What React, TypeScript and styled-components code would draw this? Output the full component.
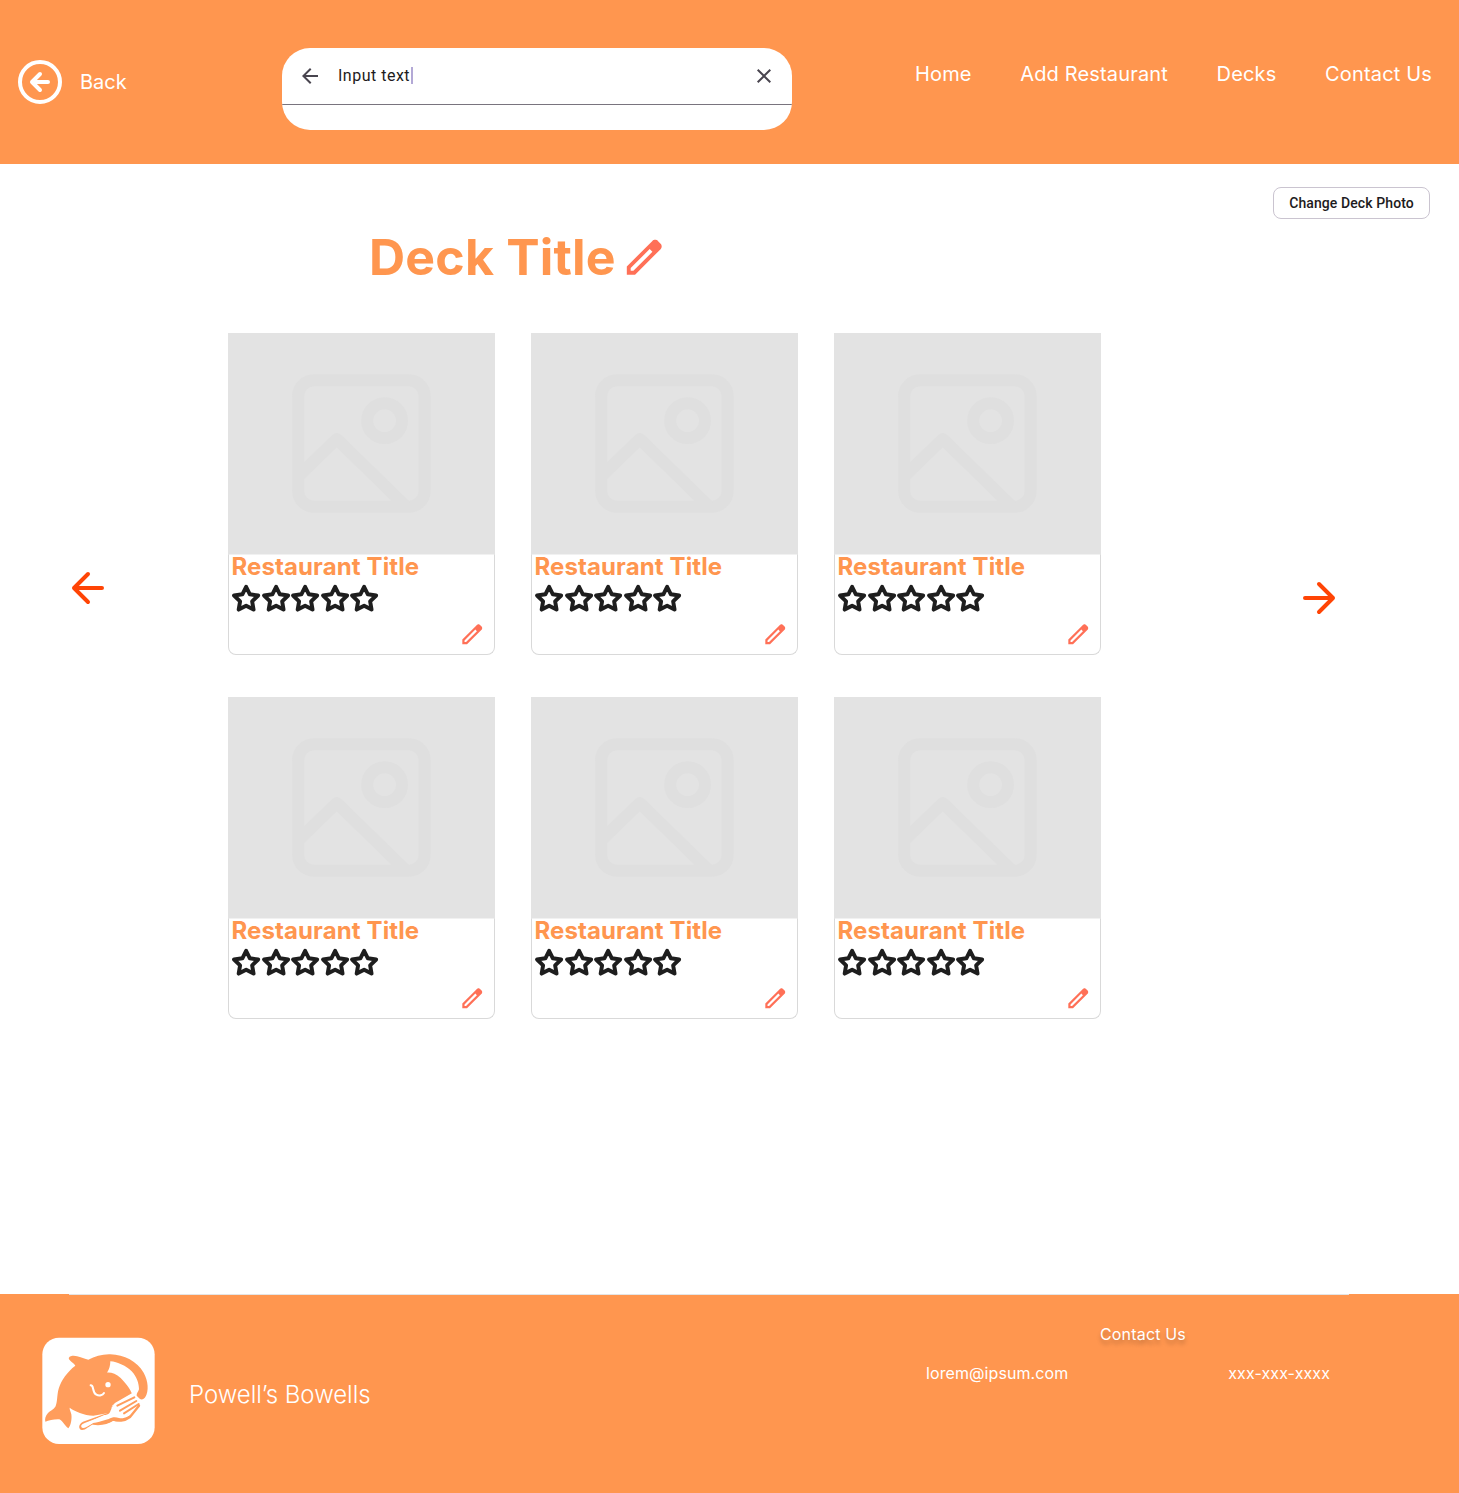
import React from 'react';
import styled, { createGlobalStyle } from 'styled-components';

const ORANGE = '#ff964f';
const WHALE = '#ff9d5c';
const CORAL = '#ff7057';

const GlobalStyle = createGlobalStyle`
  * { box-sizing: border-box; }
  body {
    margin: 0;
    background: #fff;
    font-family: Inter, "Liberation Sans", sans-serif;
  }
  svg { display: block; flex: none; }
  button { font: inherit; color: inherit; background: none; border: 0; padding: 0; }
  a { color: inherit; text-decoration: none; }
`;

const Page = styled.div`
  width: 1459px;
  height: 1493px;
  display: flex;
  flex-direction: column;
  overflow: hidden;
`;

const Header = styled.header`
  height: 164px;
  flex: none;
  display: flex;
  align-items: flex-start;
  background: ${ORANGE};
  color: #fff;
`;

const BackButton = styled.button`
  display: flex;
  align-items: center;
  gap: 16px;
  width: 266px;
  height: 48px;
  margin: 58px 0 0 16px;
  font-size: 20px;
  line-height: 24px;
`;

const SearchBox = styled.div`
  width: 510px;
  height: 82px;
  margin-top: 48px;
  border-radius: 28px;
  background: #fff;
  overflow: hidden;
`;

const SearchRow = styled.div`
  display: flex;
  align-items: center;
  height: 57px;
  padding: 0 16px 1px;
  border-bottom: 1px solid #79747e;
`;

const SearchText = styled.span`
  flex: 1;
  display: flex;
  align-items: center;
  padding-left: 16px;
  font: 400 16px/24px Roboto, sans-serif;
  letter-spacing: 0.5px;
  color: #1d1b20;
`;

const Caret = styled.span`
  width: 1.5px;
  height: 17px;
  margin-left: 1px;
  background: #b3a9d6;
`;

const Nav = styled.nav`
  display: flex;
  gap: 48.6px;
  margin: 62px 27px 0 auto;
  font-size: 20px;
  line-height: 24px;
  letter-spacing: 0.16px;
  font-weight: 420;
  white-space: nowrap;
`;

const Main = styled.main`
  height: 1130px;
  flex: none;
  display: flex;
  flex-direction: column;
`;

const PhotoButton = styled.button`
  align-self: flex-end;
  width: 157px;
  height: 32px;
  margin: 23px 29px 0 0;
  border: 1px solid #cac4d0;
  border-radius: 8px;
  font: 500 14px/20px Roboto, sans-serif;
  letter-spacing: 0.1px;
  color: #1d1b20;
  white-space: nowrap;
`;

const TitleRow = styled.div`
  display: flex;
  align-items: center;
  gap: 5px;
  height: 60px;
  margin: 8px 0 0 369px;
`;

const DeckTitle = styled.h1`
  margin: 0;
  font-size: 50px;
  line-height: 60px;
  font-weight: 700;
  letter-spacing: 0.2px;
  color: ${ORANGE};
  white-space: nowrap;
`;

const Carousel = styled.section`
  display: flex;
  align-items: flex-start;
  margin-top: 46px;
`;

const Pager = styled.button<{ $side: 'left' | 'right' }>`
  width: 48px;
  height: 48px;
  margin: ${p => (p.$side === 'left' ? '231px 116px 0 64px' : '241px 0 0 194px')};
`;

const CardGrid = styled.div`
  display: grid;
  grid-template-columns: repeat(3, 267px);
  gap: 42px 36px;
`;

const Card = styled.article`
  display: flex;
  flex-direction: column;
  height: 322px;
  border-radius: 0 0 8px 8px;
`;

const Photo = styled.div`
  height: 221px;
  flex: none;
  background: #e3e3e3;
`;

const CardBody = styled.div`
  display: flex;
  flex-direction: column;
  flex: 1;
  padding-left: 2px;
  border: 1px solid #d9d9d9;
  border-top-color: #f1f1f1;
  border-radius: 0 0 8px 8px;
`;

const CardTitle = styled.h2`
  margin: -3px 0 0 0.4px;
  font-size: 24px;
  line-height: 30px;
  font-weight: 700;
  letter-spacing: 0.12px;
  color: ${ORANGE};
  white-space: nowrap;
`;

const Stars = styled.div`
  display: flex;
  height: 30px;
  margin-top: 2px;
`;

const EditButton = styled.button`
  align-self: flex-end;
  margin: 7px 9px 0 0;
`;

const Footer = styled.footer`
  height: 199px;
  flex: none;
  display: flex;
  flex-direction: column;
  background: ${ORANGE};
  color: #fff;
`;

const Rule = styled.div`
  width: 1280px;
  height: 1px;
  margin-left: 69px;
  background: #e4e4e4;
`;

const FooterContent = styled.div`
  display: flex;
  align-items: flex-start;
`;

const Brand = styled.div`
  display: flex;
  gap: 34px;
  padding: 42px 0 0 42px;
`;

const BrandName = styled.span`
  padding-top: 43px;
  font-size: 24px;
  line-height: 29px;
  font-weight: 300;
  letter-spacing: -0.03px;
  white-space: nowrap;
`;

const ContactBlock = styled.div`
  width: 404px;
  margin: 29px 129px 0 auto;
  font-size: 16px;
  line-height: 20px;
  letter-spacing: 0.09px;
  font-weight: 420;
`;

const ContactHeading = styled.div`
  padding-left: 174px;
  letter-spacing: 0.17px;
  text-shadow: 0 4px 4px rgba(0, 0, 0, 0.25);
`;

const ContactRow = styled.div`
  display: flex;
  justify-content: space-between;
  margin-top: 19px;
`;

const PencilIcon = ({ size }: { size: number }) => (
  <svg width={size} height={size} viewBox="0 0 24 24" fill={CORAL}>
    <path
      fillRule="evenodd"
      d="M3 21V16.75L16.2 3.575C16.4 3.39 16.62 3.25 16.86 3.15C17.1 3.05 17.36 3 17.625 3C17.89 3 18.15 3.05 18.4 3.15C18.65 3.25 18.87 3.4 19.05 3.6L20.425 5C20.625 5.18 20.77 5.4 20.86 5.65C20.95 5.9 21 6.15 21 6.4C21 6.67 20.95 6.92 20.86 7.16C20.77 7.4 20.625 7.625 20.425 7.825L7.25 21H3ZM5 19H6.4L16.225 9.2L14.8 7.775L5 17.6V19Z"
    />
  </svg>
);

const StarIcon = () => (
  <svg width="29.5" height="29.5" viewBox="-0.3 0 24 24" fill="none" stroke="#1e1e1e" strokeWidth="3.2" strokeLinejoin="round" overflow="visible">
    <path d="M12 2.3L15.04 8.36L21.8 9.35L16.9 14.1L18.06 20.82L12 17.65L5.94 20.82L7.1 14.1L2.2 9.35L8.96 8.36Z" />
  </svg>
);

const PlaceholderImage = () => (
  <svg width="267" height="221" viewBox="0 0 267 221" fill="none" stroke="#dfdfdf" strokeWidth="12" strokeLinejoin="round">
    <rect x="70.1" y="47.2" width="126.6" height="126.6" rx="16" />
    <circle cx="156.6" cy="87.7" r="17.4" />
    <path d="M70.1 143.5L108.8 106L178 173.5" />
  </svg>
);

const ArrowIcon = ({ flip }: { flip?: boolean }) => (
  <svg width="48" height="48" viewBox="0 0 24 24" fill="none" stroke="#ff4405" strokeWidth="2" strokeLinecap="round" strokeLinejoin="round">
    <path d={flip ? 'M5 12H19M12 5L19 12L12 19' : 'M19 12H5M12 19L5 12L12 5'} />
  </svg>
);

const CircleArrowIcon = () => (
  <svg width="48" height="48" viewBox="0 0 24 24" fill="none" stroke="#fff" strokeWidth="2" strokeLinecap="round" strokeLinejoin="round">
    <circle cx="12" cy="12" r="10" />
    <path d="M12 8L8 12L12 16M16 12H8" />
  </svg>
);

const SearchBackIcon = () => (
  <svg width="24" height="24" viewBox="0 0 24 24" fill="#49454f">
    <path d="M7.825 13L13.425 18.6L12 20L4 12L12 4L13.425 5.4L7.825 11H20V13H7.825Z" />
  </svg>
);

const ClearIcon = () => (
  <svg width="24" height="24" viewBox="0 0 24 24" fill="#49454f">
    <path d="M6.4 19L5 17.6L10.6 12L5 6.4L6.4 5L12 10.6L17.6 5L19 6.4L13.4 12L19 17.6L17.6 19L12 13.4L6.4 19Z" />
  </svg>
);

const WhaleLogo = () => (
  <svg width="113" height="107" viewBox="36 35 339 321" fill="none" strokeLinecap="round" strokeLinejoin="round">
    <rect x="37" y="37" width="337" height="319" rx="50" fill="#fff" />
    {/* body, fin and tail */}
    <path
      fill={WHALE}
      d="M175 103C158 98 145 92 131 91C118 91 113 98 119 104C124 110 132 114 136 121C112 139 94 164 86 190C80 211 83 231 76 244C70 254 60 256 54 263C46 272 44 281 46 289C57 285 73 281 88 282C99 287 104 302 115 309C123 300 126 280 124 267C122 258 118 252 119 247C134 258 162 270 190 271L240 262L247 240L306 205C301 192 287 173 272 158C258 145 244 141 231 142C238 132 241 120 241 108C262 109 289 122 305 138C320 154 327 174 327 192C325 199 319 205 320 211L330 221C335 224 342 222 346 215C357 197 355 167 341 142C321 108 283 88 241 87C217 86 195 94 175 103Z"
    />
    {/* smile and eye */}
    <path d="M182 180C193 179 185 200 199 208C208 213 218 210 222 203" stroke="#fff" strokeWidth="6" />
    <circle cx="234" cy="178" r="8" fill="#fff" />
    {/* fork */}
    <path
      d="M238 261L159 289C145 296 144 312 156 314C166 315 176 303 190 296C213 299 235 294 250 286C267 290 284 287 299 276L329 240L308 205L256 230C248 237 245 249 238 261Z"
      fill={WHALE}
    />
    <path
      d="M157 306C151 300 156 296 166 292L235 266C244 260 243 242 256 232L307 203L315 208L319 219L329 227L327 240L313 260C299 273 280 282 267 278C254 274 246 276 236 281L185 296C174 301 163 312 157 306Z"
      fill="#fff"
    />
    <path d="M190 295C215 298 234 293 248 283C266 287 281 289 300 275L327 241" stroke={WHALE} strokeWidth="7" />
    <path d="M262 241L313 216M270 256L319 227M282 264L326 236" stroke={WHALE} strokeWidth="6" />
    <path d="M158 303L225 273" stroke="#fff" strokeWidth="8" />
  </svg>
);

const RestaurantCard = ({ title }: { title: string }) => (
  <Card>
    <Photo>
      <PlaceholderImage />
    </Photo>
    <CardBody>
      <CardTitle>{title}</CardTitle>
      <Stars>
        {[1, 2, 3, 4, 5].map(n => (
          <StarIcon key={n} />
        ))}
      </Stars>
      <EditButton aria-label="Edit restaurant">
        <PencilIcon size={26.5} />
      </EditButton>
    </CardBody>
  </Card>
);

const restaurants = Array.from({ length: 6 }, () => 'Restaurant Title');

export default function App() {
  return (
    <Page>
      <GlobalStyle />
      <Header>
        <BackButton>
          <CircleArrowIcon />
          Back
        </BackButton>
        <SearchBox>
          <SearchRow>
            <SearchBackIcon />
            <SearchText>
              Input text
              <Caret />
            </SearchText>
            <ClearIcon />
          </SearchRow>
        </SearchBox>
        <Nav>
          <a>Home</a>
          <a>Add Restaurant</a>
          <a>Decks</a>
          <a>Contact Us</a>
        </Nav>
      </Header>
      <Main>
        <PhotoButton>Change Deck Photo</PhotoButton>
        <TitleRow>
          <DeckTitle>Deck Title</DeckTitle>
          <PencilIcon size={46.5} />
        </TitleRow>
        <Carousel>
          <Pager $side="left" aria-label="Previous">
            <ArrowIcon />
          </Pager>
          <CardGrid>
            {restaurants.map((title, i) => (
              <RestaurantCard key={i} title={title} />
            ))}
          </CardGrid>
          <Pager $side="right" aria-label="Next">
            <ArrowIcon flip />
          </Pager>
        </Carousel>
      </Main>
      <Footer>
        <Rule />
        <FooterContent>
          <Brand>
            <WhaleLogo />
            <BrandName>Powell’s Bowells</BrandName>
          </Brand>
          <ContactBlock>
            <ContactHeading>Contact Us</ContactHeading>
            <ContactRow>
              <span>lorem@ipsum.com</span>
              <span>xxx-xxx-xxxx</span>
            </ContactRow>
          </ContactBlock>
        </FooterContent>
      </Footer>
    </Page>
  );
}
